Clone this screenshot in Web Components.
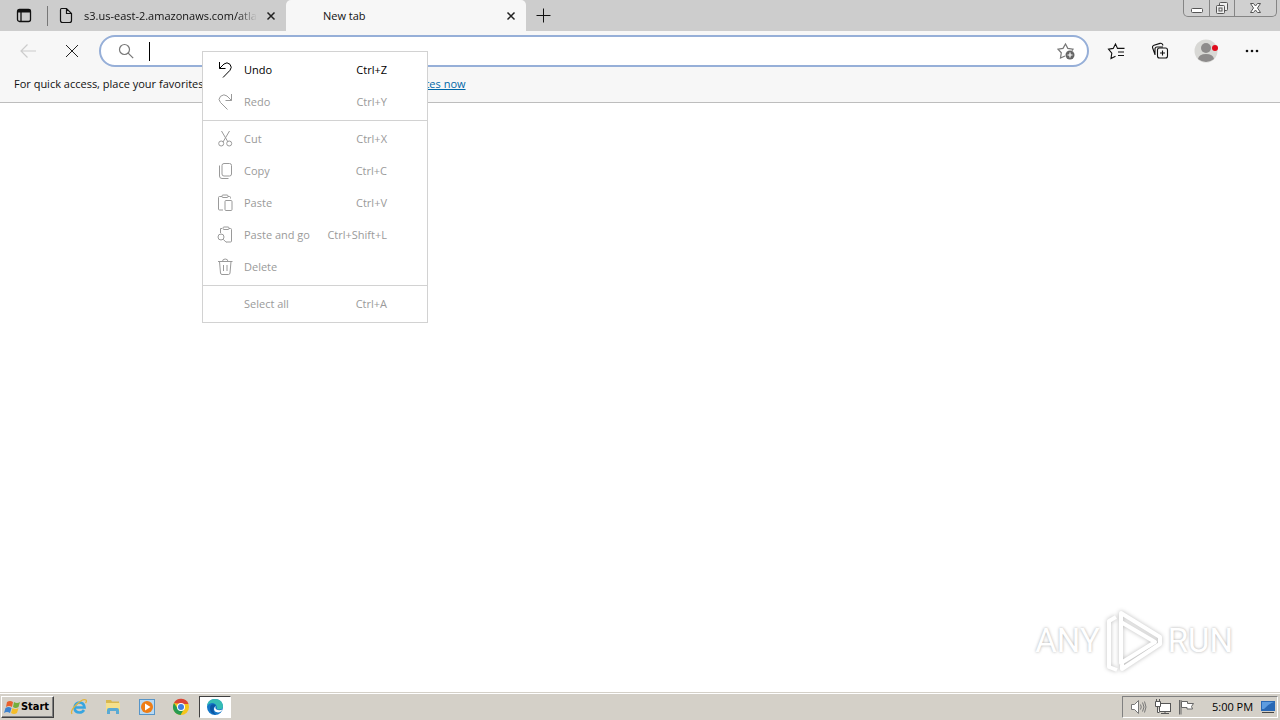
<!DOCTYPE html>
<html lang="en">
<head>
<meta charset="utf-8">
<title>New tab</title>
<style>
html,body{margin:0;height:100%}
body{font:11px/16px "Open Sans","Noto Sans",sans-serif;color:#111;background:#fff;overflow:hidden}
</style>
</head>
<body>
<desktop-screen></desktop-screen>
<script>
const base = `<style>
*{box-sizing:border-box}
button,input{font:inherit;color:inherit;background:none;border:0;margin:0;padding:0;outline:0}
svg{display:block;flex:none}
button{display:flex;align-items:center;justify-content:center}
</style>`;
const define = (name, html) => {
  const t = document.createElement('template');
  t.innerHTML = base + html;
  customElements.define(name, class extends HTMLElement {
    constructor(){ super(); this.attachShadow({mode:'open'}).append(t.content.cloneNode(true)); }
  });
};

const glyphs = {
  undo:'<path d="M3.500 1v6.500h6M3.500 7.500L8 3q3-2.500 6 .3 2.500 3 0 6L7 16.500"/>',
  redo:'<path d="M15.500 1v6.500h-6M15.500 7.500L11 3Q8 .5 4.500 3.300 1.500 6.500 4.500 9.500l7 7"/>',
  cut:'<path d="M5.500 1l6.500 11M13.500 1L7 12"/><circle cx="5.200" cy="13.500" r="2.500"/><circle cx="13.200" cy="13.500" r="2.500"/>',
  copy:'<rect x="6" y="1.500" width="9.500" height="12.500" rx="2"/><path d="M3.500 3.500V14q0 2.500 2.500 2.500h6.500"/>',
  paste:'<path d="M6 2.500H3.500q-1 0-1 1v11.500q0 1 1 1H7M12 2.500h1.500q1 0 1 1v1"/><rect x="6" y="1" width="6" height="2.500" rx="1"/><rect x="9" y="6.500" width="7" height="10" rx="1"/>',
  pastego:'<path d="M6 2.500H4.500V7M13 2.500h1.500q1 0 1 1v11.500q0 1-1 1H10"/><rect x="7" y="1" width="6" height="2.500" rx="1"/><circle cx="5" cy="11" r="3"/><path d="M7.200 13.300l3 3"/>',
  trash:'<path d="M2 3.500h14.500M6.500 3.500Q6.500 1 9.200 1T12 3.500M3.500 3.500l1 11.500q.2 1.500 1.500 1.500h6.500q1.300 0 1.500-1.500l1-11.500M7.500 7v6M11 7v6"/>',
  none:''
};
define('menu-row', `<style>
:host{display:block}
button{width:100%;height:32px;padding:0 40px 0 13px;color:#000;text-align:left;justify-content:flex-start;gap:10px}
:host([off]) button{color:#9a9a9a}
.k{margin-left:auto}
</style><button type="button" role="menuitem"><svg width="18" height="18" fill="none" stroke="currentColor"></svg><slot></slot><span class="k"><slot name="key"></slot></span></button>`);
const rows = (list) => list.map(([icon,label,key,on]) =>
  `<menu-row ${on?'':'off'} data-icon="${icon}"><span>${label}</span><span slot="key">${key}</span></menu-row>`).join('');

define('context-menu', `<style>
:host{display:block;width:226px;background:#fff;border:1px solid #d2d2d2}
.g{padding:2px 0}
.g+.g{border-top:1px solid #d2d2d2}
</style><div role="menu">
<div class="g">${rows([['undo','Undo','Ctrl+Z',1],['redo','Redo','Ctrl+Y']])}</div>
<div class="g">${rows([['cut','Cut','Ctrl+X'],['copy','Copy','Ctrl+C'],['paste','Paste','Ctrl+V'],['pastego','Paste and go','Ctrl+Shift+L'],['trash','Delete','']])}</div>
<div class="g">${rows([['none','Select all','Ctrl+A']])}</div></div>`);

define('browser-tab', `<style>
:host{display:flex;align-items:center;height:31px;min-width:0}
.t{flex:1;white-space:nowrap;overflow:hidden}
:host([active]){background:#f7f7f7;border-radius:5px 5px 0 0}
:host([fade]) .t{-webkit-mask:linear-gradient(to left,transparent,#000 20px)}
.i{width:26px;padding-left:1px}
:host([active]) .i{width:37px}
button{width:20px;height:24px;margin:0 5px 0 4px}
</style><span class="i"><slot name="icon"></slot></span><span class="t"><slot></slot></span>
<button type="button" aria-label="Close tab"><svg width="10" height="10" stroke="#222" stroke-width="1.500"><path d="M1.500 1.500l7 7M8.500 1.500l-7 7"/></svg></button>`);

define('window-buttons', `<style>
:host{display:flex;align-self:flex-start;margin:0 3px 0 auto;border:1px solid #858585;border-top:0;border-radius:0 0 5px 5px;height:17px;background:#d0d0d0}
button{width:25px;height:16px}
button+button{border-left:1px solid #858585}
button:last-child{width:42px}
</style>
<button type="button" aria-label="Minimize"><svg width="14" height="14" fill="#fff" stroke="#555"><rect x="1.500" y="7.500" width="11" height="4" rx="1"/></svg></button>
<button type="button" aria-label="Restore"><svg width="14" height="14" fill="#eee" stroke="#555"><rect x="4.500" y="1.500" width="8" height="8" rx="1"/><rect x="1.500" y="4.500" width="8" height="8" rx="1"/><rect x="4" y="7" width="3" height="3"/></svg></button>
<button type="button" aria-label="Close"><svg width="13" height="12" fill="#fff" stroke="#555"><path d="M1.500 1.500h3l2 2.500 2-2.500h3L8.500 6l3 4.500h-3L6.500 8l-2 2.500h-3L4.500 6z"/></svg></button>`);

define('tab-strip', `<style>
:host{display:flex;align-items:center;height:31px;background:#cdcdcd}
.a{width:47px;height:31px}
.s{width:1px;height:20px;background:#777;margin-right:10px}
.one{width:228px}.two{width:240px}
.n{width:34px;height:31px}
</style>
<button class="a" type="button" aria-label="Tab actions"><svg width="16" height="15" fill="none" stroke="#111" stroke-width="1.300"><rect x="1.500" y="1.500" width="13" height="12" rx="2"/><path d="M1.500 3h13" stroke-width="3"/><path d="M5 4v9"/></svg></button>
<span class="s"></span>
<browser-tab class="one" fade><svg slot="icon" width="14" height="17" fill="none" stroke="#111" stroke-width="1.200"><path d="M2.500 1.500h5l5 5v7q0 2-2 2h-7q-2 0-2-2V3q0-1.500 1-1.500zM7.500 1.500v5h5"/></svg>s3.us-east-2.amazonaws.com/atlas</browser-tab>
<browser-tab class="two" active>New tab</browser-tab>
<button class="n" type="button" aria-label="New tab"><svg width="15" height="15" stroke="#111"><path d="M.5 7.500h14M7.500.5v14"/></svg></button>
<window-buttons></window-buttons>`);

define('address-bar', `<style>
:host{display:flex;align-items:center;height:32px;border:2px solid #96afd8;border-radius:16px;background:#fff;padding:0 12px 0 17px}
i{width:1px;height:19px;background:#000;margin:0 4px 0 15px}
input{flex:1;min-width:0;height:24px}
</style><svg width="16" height="16" fill="none" stroke="#777" stroke-width="1.200"><circle cx="6.500" cy="6.500" r="5"/><path d="M10.200 10.200l5 5"/></svg><i></i>
<input type="text" aria-label="Address and search bar">
<button type="button" aria-label="Add to favorites"><svg width="18" height="18" fill="none" stroke="#777" stroke-width="1.200"><path d="M8 14l-4.500 2 .8-5.200L1 7.200l5-.8L8.500 2l2.300 4.400 5.200.8-1 1.500"/><circle cx="13" cy="13" r="4.500" fill="#666" stroke="none"/><path d="M13 10.500v5M10.500 13h5" stroke="#fff"/></svg></button>`);

define('tool-bar', `<style>
:host{display:flex;align-items:center;padding:4px 6px 1px;background:#f7f7f7}
button{width:44px;height:32px}
button.p{width:48px}
address-bar{flex:1;margin:0 5px}
</style>
<button type="button" aria-label="Back"><svg width="18" height="16" fill="none" stroke="#ccc" stroke-width="1.200"><path d="M17 8H2M8.500 1.500L2 8l6.500 6.500"/></svg></button>
<button type="button" aria-label="Stop"><svg width="14" height="14" stroke="#222"><path d="M1 1l12 12M13 1L1 13"/></svg></button>
<address-bar></address-bar>
<button type="button" aria-label="Favorites"><svg width="18" height="18" fill="none" stroke="#111" stroke-width="1.100"><path d="M8.500 14.200L4 16.500l.8-5.400L1.500 7.200l4.700-.8L8.500 2l2 4.400h7M11 10h6M11 13.500h6"/></svg></button>
<button type="button" aria-label="Collections"><svg width="18" height="18" fill="none" stroke="#111" stroke-width="1.100"><path d="M4 12.500L1.500 5.500Q1 4 3 3.200l6-1.800q2-.5 2.700 1.300l.3.800M4 13V7q0-2 2-2h6"/><rect x="6.500" y="6" width="10" height="10" rx="2"/><path d="M11.500 8.500v5M9 11h5"/></svg></button>
<button class="p" type="button" aria-label="Profile"><svg width="26" height="24"><circle cx="13" cy="12" r="11.500" fill="#d8d8d5"/><circle cx="13" cy="9" r="5" fill="#8d8b8b"/><path d="M5 20q1-5 8-5t8 5q-8 6-16 0z" fill="#8d8b8b"/><circle cx="22" cy="9" r="3" fill="#e00b1c"/></svg></button>
<button type="button" aria-label="Settings and more"><svg width="16" height="4" fill="#111"><circle cx="3" cy="2" r="1.300"/><circle cx="8" cy="2" r="1.300"/><circle cx="13" cy="2" r="1.300"/></svg></button>`);

define('favorites-bar', `<style>
:host{display:flex;gap:16px;height:35px;padding:8px 14px 0;background:#f7f7f7;border-bottom:1px solid #bdbdbd;white-space:nowrap}
a{color:#0067a8}
</style><span>For quick access, place your favorites here on the favorites bar.</span><a href="#favorites">Manage favorites now</a>`);

define('any-run', `<style>
:host{display:flex;align-items:center;gap:4px;font:33px/60px "Roboto",sans-serif;color:#fff;text-shadow:0 0 3px #aaa}
svg{filter:drop-shadow(0 0 2px #bbb)}
</style><span>ANY</span><svg width="60" height="64" fill="none" stroke="#fff" stroke-width="4" stroke-linejoin="round"><path d="M17 42V4l39 24v7L18 60v-8M17 13l34 20-34 21V42M12 8l-7 4v46l8 3"/></svg><span>RUN</span>`);

define('task-bar', `<style>
:host{display:flex;align-items:center;height:27px;padding:1px 2px 1px 1px;background:#d4d0c8;border-top:1px solid #fff;box-shadow:0 -1px #d4d0c8}
button{width:32px;height:22px}
.start{width:53px;font:bold 11px/16px "DejaVu Sans Condensed","DejaVu Sans",sans-serif;color:#000;border:1px solid;border-color:#fff #404040 #404040 #fff;box-shadow:inset -1px -1px #808080;padding-right:2px}
.apps{display:flex;gap:2px;margin-left:9px}
.on{background:#fff;border:1px solid;border-color:#404040 #fff #fff #404040}
.tray{display:flex;align-items:center;height:22px;width:156px;margin-left:auto;padding:0 0 0 3px;border:1px solid;border-color:#808080 #fff #fff #808080}
.tray button{width:24px}
time{margin:0 auto 0 14px;color:#000;white-space:nowrap}
.tray button.d{width:18px}
</style>
<button class="start" type="button"><svg width="17" height="17"><path d="M3 3q3-2 6 0L8 8Q5 6 2 8z" fill="#e8602c"/><path d="M10 3q3 2 6 0l-1.500 5q-3 2-5.500 0z" fill="#74ae3b"/><path d="M1.500 9q3-2 6 0L6 14q-3-2-6 0z" fill="#3c82cf"/><path d="M8.500 9q3 2 6 0L13 14q-3 2-6 0z" fill="#f5bd28"/></svg>Start</button>
<div class="apps">
<button type="button" aria-label="Internet Explorer"><svg width="18" height="18" fill="none"><path d="M4.500 9.500h10Q14 4.500 9.500 4.500T4.500 10q.5 4.500 5 4.500 3 0 4.500-2.500" stroke="#37a5e0" stroke-width="2.600"/><path d="M2 16Q0 13 6 7q7-7 10-5 1 1-.5 3" stroke="#e2b43c" stroke-width="1.300"/></svg></button>
<button type="button" aria-label="Explorer"><svg width="18" height="18"><path d="M2 2h5l1 1.500h7V10H2z" fill="#d8b850"/><path d="M2 5h14v8H2z" fill="#f5e08c"/><path d="M3 16v-4q0-2 2-2h8q2 0 2 2v4h-3v-3H6v3z" fill="#5aaad4"/></svg></button>
<button type="button" aria-label="Media Player"><svg width="18" height="18"><rect x="1.500" y="1.500" width="15" height="15" fill="#b8d9f3" stroke="#5795c8"/><circle cx="9" cy="9" r="6" fill="#ee7d15"/><path d="M7 5.500l5.500 3.500L7 12.500z" fill="#fff"/></svg></button>
<button type="button" aria-label="Chrome"><svg width="18" height="18"><circle cx="9" cy="9" r="8" fill="#f5c51b"/><path d="M2 5a8 8 0 0 1 14.500 1H9z" fill="#db4437"/><path d="M2 5a8 8 0 0 0 6.500 12L12 11 6 11z" fill="#279b52"/><circle cx="9" cy="9" r="4" fill="#fff"/><circle cx="9" cy="9" r="3" fill="#3f7ee0"/></svg></button>
<button class="on" type="button" aria-label="Edge"><svg width="18" height="18"><circle cx="9" cy="9" r="8" fill="#1477c8"/><path d="M1 8Q2 1 9 1t8 7q0 4-5 3.500Q10 11 11 9.500 10 5 6 5 3 5 1 8z" fill="#35bdb4"/><path d="M10 8q-1.500 2 .5 3.500 2.500 1.500 6 0Q15 14.500 12 14.500 8 14 8 11q0-2 2-3z" fill="#fff"/><path d="M5 7q-2 3 0 7 1.500 2 5 3-3-3-2.500-6.500Q8 8 10 7 7 5.500 5 7z" fill="#0b57a4"/></svg></button>
</div>
<div class="tray">
<button type="button" aria-label="Volume"><svg width="17" height="16" fill="none" stroke="#777"><path d="M1.500 5.500h3l4-4v13l-4-4h-3z" fill="#fff"/><path d="M10.500 5.500q1.500 2.500 0 5M12.500 3.500q3 4.500 0 9M14.500 2.500q3 5.500 0 11"/></svg></button>
<button type="button" aria-label="Network"><svg width="17" height="16" fill="#fff" stroke="#555"><rect x="5.500" y="4.500" width="11" height="8"/><path d="M7 14.500h8M11 12.500v2M3.500 8v5.500h2"/><path d="M1.500 2.500h5v5h-5zM2.500 0v2M5.500 0v2"/></svg></button>
<button type="button" aria-label="Action Center"><svg width="17" height="16" fill="#fff" stroke="#666"><path d="M1.500 1v14.500M3 1v14.500"/><path d="M3.500 2.500h6v2h6l-2 3 1 2.500H9V8.500H3.500z"/></svg></button>
<time>5:00 PM</time>
<button class="d" type="button" aria-label="Show desktop"><svg width="16" height="14"><path d="M1 1h14v10H1z" fill="#2868b5"/><path d="M2 2h12Q8 4 4 9H2z" fill="#5c9ce0"/><path d="M2 12h12v1H2z" fill="#444"/></svg></button>
</div>`);

define('desktop-screen', `<style>
:host{display:flex;flex-direction:column;height:100vh;position:relative}
main{flex:1;background:#fff}
context-menu{position:absolute;left:202px;top:51px}
any-run{position:absolute;right:47px;bottom:47px}
</style><tab-strip></tab-strip><tool-bar></tool-bar><favorites-bar></favorites-bar><main></main><task-bar></task-bar>
<context-menu></context-menu><any-run></any-run>`);

const menu = document.querySelector('desktop-screen').shadowRoot.querySelector('context-menu');
menu.shadowRoot.querySelectorAll('menu-row').forEach(row => {
  row.shadowRoot.querySelector('svg').innerHTML = glyphs[row.dataset.icon];
  row.shadowRoot.querySelector('button').disabled = row.hasAttribute('off');
});
</script>
</body>
</html>
